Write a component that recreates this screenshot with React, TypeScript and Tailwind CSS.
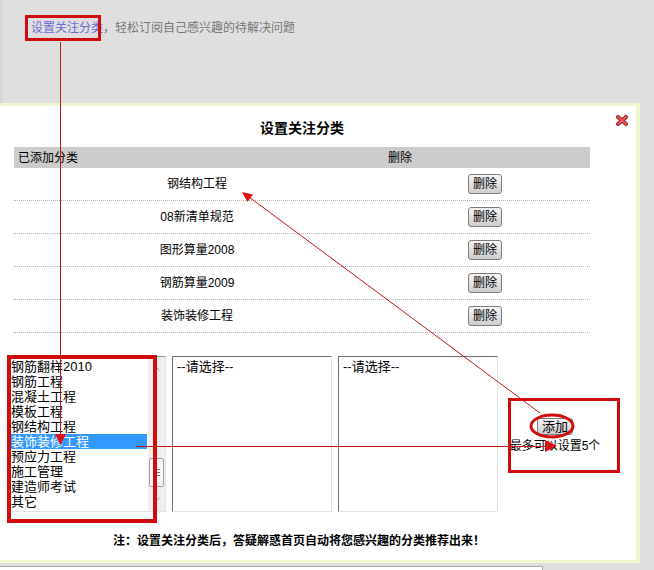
import React from 'react';

const added = ['钢结构工程', '08新清单规范', '图形算量2008', '钢筋算量2009', '装饰装修工程'];

const categories = [
  '钢筋翻样2010',
  '钢筋工程',
  '混凝土工程',
  '模板工程',
  '钢结构工程',
  '装饰装修工程',
  '预应力工程',
  '施工管理',
  '建造师考试',
  '其它',
];

function GrayButton({ label, className = '' }: { label: string; className?: string }) {
  return (
    <button
      className={`flex items-center justify-center rounded-[3px] border border-[#7d7d7d] bg-gradient-to-b from-[#f6f6f6] to-[#cdcdcd] text-[12px] leading-none text-black ${className}`}
    >
      {label}
    </button>
  );
}

function EmptySelect() {
  return (
    <div className="h-[156px] w-[160px] border-t border-l border-r border-b border-t-[#707070] border-l-[#707070] border-r-[#e3e3e3] border-b-[#e3e3e3] bg-white pl-[4px] pt-[2px] text-[13px] leading-[15px] text-black">
      --请选择--
    </div>
  );
}

function CategoryList() {
  return (
    <div className="flex h-[156px] w-[159px] border border-t-[#9a9a9a] border-l-[#9a9a9a] border-r-[#e3e3e3] border-b-[#e3e3e3] bg-white">
      <div className="flex-1 pl-[2px] pt-[2px]">
        {categories.map((c) => (
          <div
            key={c}
            className={`h-[15px] pl-[1px] text-[13px] leading-[15px] ${
              c === '装饰装修工程' ? 'bg-[#3399ff] text-white' : 'text-black'
            }`}
          >
            {c}
          </div>
        ))}
      </div>
      {/* scrollbar */}
      <div className="relative ml-[1px] w-[17px] bg-[#eeeeee]">
        <svg className="absolute left-[5px] top-[10px]" width="7" height="4" viewBox="0 0 7 4">
          <path d="M0.5 3.5 L3.5 0.5 L6.5 3.5" fill="none" stroke="#9a9a9a" />
        </svg>
        <div className="absolute left-[1px] top-[101px] flex h-[29px] w-[15px] flex-col items-center justify-center gap-[2px] rounded-[2px] border border-[#a0a0a0] bg-[#f6f6f6]">
          <span className="h-px w-[6px] bg-[#777]" />
          <span className="h-px w-[6px] bg-[#777]" />
          <span className="h-px w-[6px] bg-[#777]" />
        </div>
        <svg className="absolute bottom-[10px] left-[5px]" width="7" height="4" viewBox="0 0 7 4">
          <path d="M0.5 0.5 L3.5 3.5 L6.5 0.5" fill="none" stroke="#9a9a9a" />
        </svg>
      </div>
    </div>
  );
}

function Annotations() {
  const red = '#d10c0c';
  const line = '#c01818';
  return (
    <svg
      className="pointer-events-none absolute left-0 top-0 z-10"
      width="654"
      height="570"
      viewBox="0 0 654 570"
    >
      {/* box around the link */}
      <rect x="26.5" y="16.5" width="73" height="23" fill="none" stroke={red} strokeWidth="3" />
      {/* box around the category list */}
      <rect x="9" y="357" width="146" height="164" fill="none" stroke={red} strokeWidth="4" />
      {/* box around the add area */}
      <rect x="509.5" y="399.5" width="109" height="72" fill="none" stroke={red} strokeWidth="3" />
      {/* ellipse round the add button */}
      <ellipse cx="552" cy="426" rx="21" ry="11" fill="none" stroke={red} strokeWidth="3" />

      {/* link -> list */}
      <line x1="60.5" y1="42" x2="60.5" y2="436" stroke={line} strokeWidth="1" />
      <polygon points="55,434 66,434 60.5,445" fill="#e01010" />

      {/* list -> add */}
      <line x1="136" y1="446.5" x2="548" y2="446.5" stroke={line} strokeWidth="1" />
      <polygon points="545,440 545,452 557,446" fill="#e01010" />

      {/* add -> added table */}
      <line x1="540" y1="413" x2="249" y2="197" stroke={line} strokeWidth="1" />
      <polygon points="242,192 253,194.5 247.5,202" fill="#e01010" />
    </svg>
  );
}

export default function App() {
  return (
    <div className="relative h-[570px] w-[654px] overflow-hidden bg-[#dfdfdf] font-['Liberation_Sans','Noto_Sans_CJK_SC',sans-serif]">
      <Annotations />

      {/* page strip above the dialog */}
      <div className="h-[103px] border-l-2 border-[#d3d6dc] pl-[29px] pt-[20px] text-[12px] leading-[16px] text-[#777]">
        <a className="text-[#6b6bd6]">设置关注分类</a>
        <span>，轻松订阅自己感兴趣的待解决问题</span>
      </div>

      {/* dialog */}
      <div className="relative h-[460px] w-[640px] border-t-[3px] border-r-[4px] border-b-[3px] border-[#eff7cf] bg-white">
        <svg className="absolute right-[8px] top-[9px]" width="12" height="11" viewBox="0 0 12 11">
          <path d="M2 2 L10 9 M10 2 L2 9" stroke="#9c2626" strokeWidth="4" strokeLinecap="round" />
          <path d="M2 2 L10 9 M10 2 L2 9" stroke="#e65a5a" strokeWidth="2" strokeLinecap="round" />
        </svg>

        <div className="ml-[14px] mt-[13px] w-[576px] text-center text-[14px] font-bold leading-[18px] text-black">
          设置关注分类
        </div>

        <div className="ml-[14px] mt-[10px] w-[576px] text-[12px] text-black">
          <div className="flex h-[21px] items-center bg-[#cccccc]">
            <div className="w-[366px] pl-[4px]">已添加分类</div>
            <div className="pl-[8px]">删除</div>
          </div>
          {added.map((name) => (
            <div key={name} className="flex h-[33px] items-center border-b border-dotted border-[#b5b5b5]">
              <div className="w-[366px] text-center">{name}</div>
              <div className="flex flex-1 justify-center">
                <GrayButton label="删除" className="h-[20px] w-[34px]" />
              </div>
            </div>
          ))}
        </div>

        <div className="mt-[23px] flex">
          <div className="ml-[7px]">
            <CategoryList />
          </div>
          <div className="ml-[6px]">
            <EmptySelect />
          </div>
          <div className="ml-[6px]">
            <EmptySelect />
          </div>
          <div className="ml-[4px] flex w-[106px] flex-col items-center justify-center gap-[4px] pt-[2px]">
            <GrayButton label="添加" className="h-[17px] w-[36px] text-[13px]" />
            <div className="text-[12px] leading-[14px] text-black">最多可以设置5个</div>
          </div>
        </div>

        <div className="mt-[21px] w-[598px] text-center text-[12px] font-bold leading-[16px] text-black">
          注：设置关注分类后，答疑解惑首页自动将您感兴趣的分类推荐出来！
        </div>
      </div>

      <div className="mt-[3px] h-[10px] w-[543px] border-t border-r border-[#a8a8a8] bg-white" />
    </div>
  );
}
